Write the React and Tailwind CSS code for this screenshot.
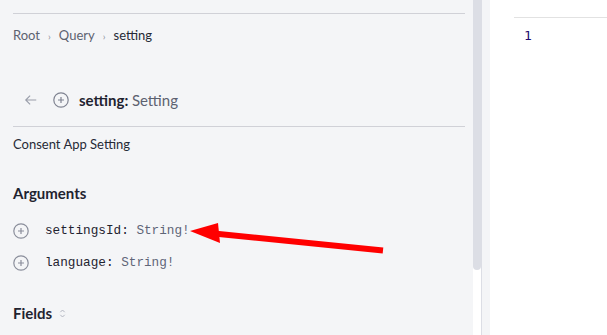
import React from 'react';

const PlusCircle = ({ className }) => (
  <svg viewBox="0 0 16 16" className={className} fill="none" stroke="currentColor" strokeWidth="1.2">
    <circle cx="8" cy="8" r="7.2" />
    <path d="M8 5v6M5 8h6" />
  </svg>
);

const ArgRow = ({ name, type }) => (
  <div className="flex items-center h-[32px]">
    <PlusCircle className="w-[16px] h-[16px] text-[#8a8e9b]" />
    <span className="ml-[16px] font-['Liberation_Mono',monospace] text-[12.7px] text-[#1f2330]">
      {name}: <span className="text-[#5f6577]">{type}</span>
    </span>
  </div>
);

export default function App() {
  return (
    <div className="relative flex w-[607px] h-[335px] overflow-hidden bg-white font-['Lato',sans-serif]">
      {/* Docs panel */}
      <div className="w-[473px] h-full bg-[#f4f5f7] pl-[13px] pr-[8px]">
        <div className="mt-[13px] h-px bg-[#d0d1d7]" />
        <div className="mt-[14px] flex items-center h-[16px] text-[13px] text-[#5d6270]">
          <span>Root</span>
          <span className="mx-[8px] text-[10px] text-[#8a8e9b]">›</span>
          <span>Query</span>
          <span className="mx-[8px] text-[10px] text-[#8a8e9b]">›</span>
          <span className="text-[#262a36]">setting</span>
        </div>
        <div className="mt-[46px] flex items-center h-[20px]">
          <svg viewBox="0 0 16 16" className="ml-[11px] w-[14px] h-[14px] text-[#9a9eaa]" fill="none" stroke="currentColor" strokeWidth="1.3">
            <path d="M14 8H2M7 3L2 8l5 5" />
          </svg>
          <PlusCircle className="ml-[15px] w-[16px] h-[16px] text-[#7f8391]" />
          <span className="ml-[10px] text-[15px] font-bold text-[#1f2330]">
            setting: <span className="font-normal text-[#5c6170]">Setting</span>
          </span>
        </div>
        <div className="mt-[16px] h-px bg-[#d0d1d7]" />
        <div className="mt-[10px] h-[16px] flex items-center text-[13px] text-[#262a36]">Consent App Setting</div>
        <div className="mt-[31px] h-[18px] flex items-center text-[15px] font-bold text-[#1f2330]">Arguments</div>
        <div className="mt-[13px]">
          <ArgRow name="settingsId" type="String!" />
          <ArgRow name="language" type="String!" />
        </div>
        <div className="mt-[25px] h-[18px] flex items-center">
          <span className="text-[15px] font-bold text-[#1f2330]">Fields</span>
          <svg viewBox="0 0 8 10" className="ml-[7px] w-[7px] h-[9px] text-[#a9adb8]" fill="none" stroke="currentColor" strokeWidth="1">
            <path d="M1.5 3.5L4 1l2.5 2.5M1.5 6.5L4 9l2.5-2.5" />
          </svg>
        </div>
      </div>

      {/* Scrollbar */}
      <div className="w-[8px] h-full flex flex-col bg-white">
        <div className="h-[270px] bg-[#dcdee5] rounded-b-[4px]" />
      </div>
      <div className="w-px h-full bg-[#dcdee5]" />
      <div className="w-[8px] h-full bg-[#f4f5f7]" />

      {/* Result panel */}
      <div className="flex-1 h-full bg-white pl-[24px]">
        <div className="mt-[17px] h-px bg-[#e2e2e2]" />
        <div className="mt-[10px] ml-[10px] h-[16px] flex items-center font-['DejaVu_Sans_Mono',monospace] text-[13px] text-[#230b6e]">1</div>
      </div>

      {/* Annotation arrow */}
      <svg className="absolute left-0 top-0 pointer-events-none" width="607" height="335" viewBox="0 0 607 335">
        <line x1="214" y1="233.5" x2="383" y2="250.5" stroke="#ff0000" strokeWidth="6" />
        <polygon points="190,231 218,223 220,243" fill="#ff0000" />
      </svg>
    </div>
  );
}
